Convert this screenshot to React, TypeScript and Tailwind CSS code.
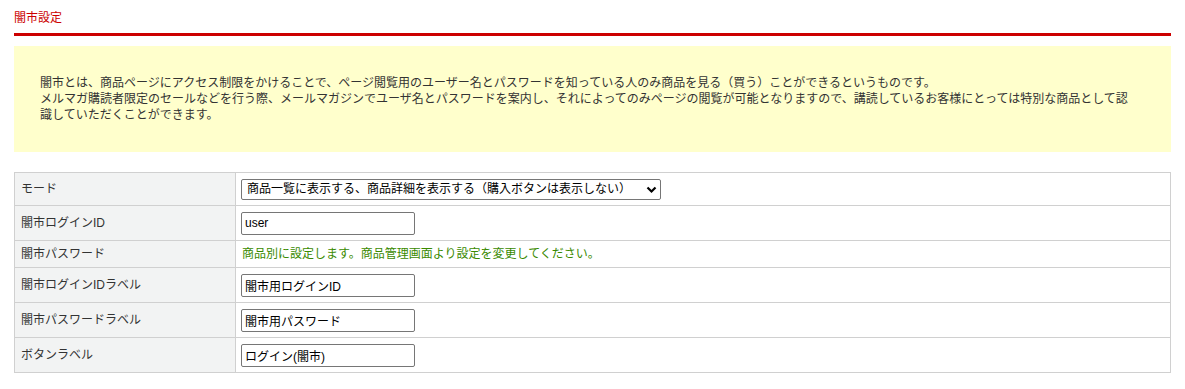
import React, { useState } from 'react';

const font = { fontFamily: '"Liberation Sans", "Noto Sans CJK JP", sans-serif' };

const App: React.FC = () => {
  const [mode, setMode] = useState('1');
  const [loginId, setLoginId] = useState('user');
  const [idLabel, setIdLabel] = useState('闇市用ログインID');
  const [pwLabel, setPwLabel] = useState('闇市用パスワード');
  const [btnLabel, setBtnLabel] = useState('ログイン(闇市)');

  const inputCls =
    'block w-[174px] h-[23px] px-[3px] border border-[#767676] rounded-[2px] bg-white text-[12px] text-black focus:outline-none';

  return (
    <div className="min-h-screen bg-white px-[14px] text-[12px] text-[#333]" style={font}>
      <h2 className="pt-[9px] pb-[6px] text-[12px] leading-[18px] font-normal text-[#cc0000] border-b-[3px] border-[#cc0000]">
        闇市設定
      </h2>

      <div className="mt-[10px] bg-[#ffffcc] pl-[26px] pr-[34px] pt-[29px] pb-[29px] leading-[16px]">
        闇市とは、商品ページにアクセス制限をかけることで、ページ閲覧用のユーザー名とパスワードを知っている人のみ商品を見る（買う）ことができるというものです。
        <br />
        メルマガ購読者限定のセールなどを行う際、メールマガジンでユーザ名とパスワードを案内し、それによってのみページの閲覧が可能となりますので、講読しているお客様にとっては特別な商品として認識していただくことができます。
      </div>

      <table className="mt-[20px] w-full border-collapse border border-[#d0d0d0]">
        <tbody>
          <tr className="h-[33px]">
            <th className="w-[221px] border border-[#d0d0d0] bg-[#f2f3f3] pl-[6px] text-left font-normal">モード</th>
            <td className="border border-[#d0d0d0] pl-[5px]">
              <div className="relative w-[420px]">
                <select
                  value={mode}
                  onChange={(e) => setMode(e.target.value)}
                  className="block w-full h-[21px] appearance-none pl-[5px] pr-6 border border-[#767676] rounded-[2px] bg-white text-[12px] text-black focus:outline-none"
                  style={font}
                >
                  <option value="1">商品一覧に表示する、商品詳細を表示する（購入ボタンは表示しない）</option>
                  <option value="2">商品一覧に表示しない、商品詳細を表示しない</option>
                </select>
                <svg
                  className="absolute right-[4px] top-[7px] pointer-events-none"
                  width="11"
                  height="8"
                  viewBox="0 0 11 8"
                >
                  <path d="M1.5 1.5 L5.5 5.5 L9.5 1.5" fill="none" stroke="#000" strokeWidth="2.2" />
                </svg>
              </div>
            </td>
          </tr>
          <tr className="h-[35px]">
            <th className="border border-[#d0d0d0] bg-[#f2f3f3] pl-[6px] text-left font-normal">闇市ログインID</th>
            <td className="border border-[#d0d0d0] pl-[5px]">
              <input className={inputCls} style={font} value={loginId} onChange={(e) => setLoginId(e.target.value)} />
            </td>
          </tr>
          <tr className="h-[27px]">
            <th className="border border-[#d0d0d0] bg-[#f2f3f3] pl-[6px] text-left font-normal">闇市パスワード</th>
            <td className="border border-[#d0d0d0] pl-[6px] text-[#3a8a00]">
              商品別に設定します。商品管理画面より設定を変更してください。
            </td>
          </tr>
          <tr className="h-[35px]">
            <th className="border border-[#d0d0d0] bg-[#f2f3f3] pl-[6px] text-left font-normal">闇市ログインIDラベル</th>
            <td className="border border-[#d0d0d0] pl-[5px]">
              <input className={inputCls} style={font} value={idLabel} onChange={(e) => setIdLabel(e.target.value)} />
            </td>
          </tr>
          <tr className="h-[35px]">
            <th className="border border-[#d0d0d0] bg-[#f2f3f3] pl-[6px] text-left font-normal">闇市パスワードラベル</th>
            <td className="border border-[#d0d0d0] pl-[5px]">
              <input className={inputCls} style={font} value={pwLabel} onChange={(e) => setPwLabel(e.target.value)} />
            </td>
          </tr>
          <tr className="h-[35px]">
            <th className="border border-[#d0d0d0] bg-[#f2f3f3] pl-[6px] text-left font-normal">ボタンラベル</th>
            <td className="border border-[#d0d0d0] pl-[5px]">
              <input className={inputCls} style={font} value={btnLabel} onChange={(e) => setBtnLabel(e.target.value)} />
            </td>
          </tr>
        </tbody>
      </table>
    </div>
  );
};

export default App;
